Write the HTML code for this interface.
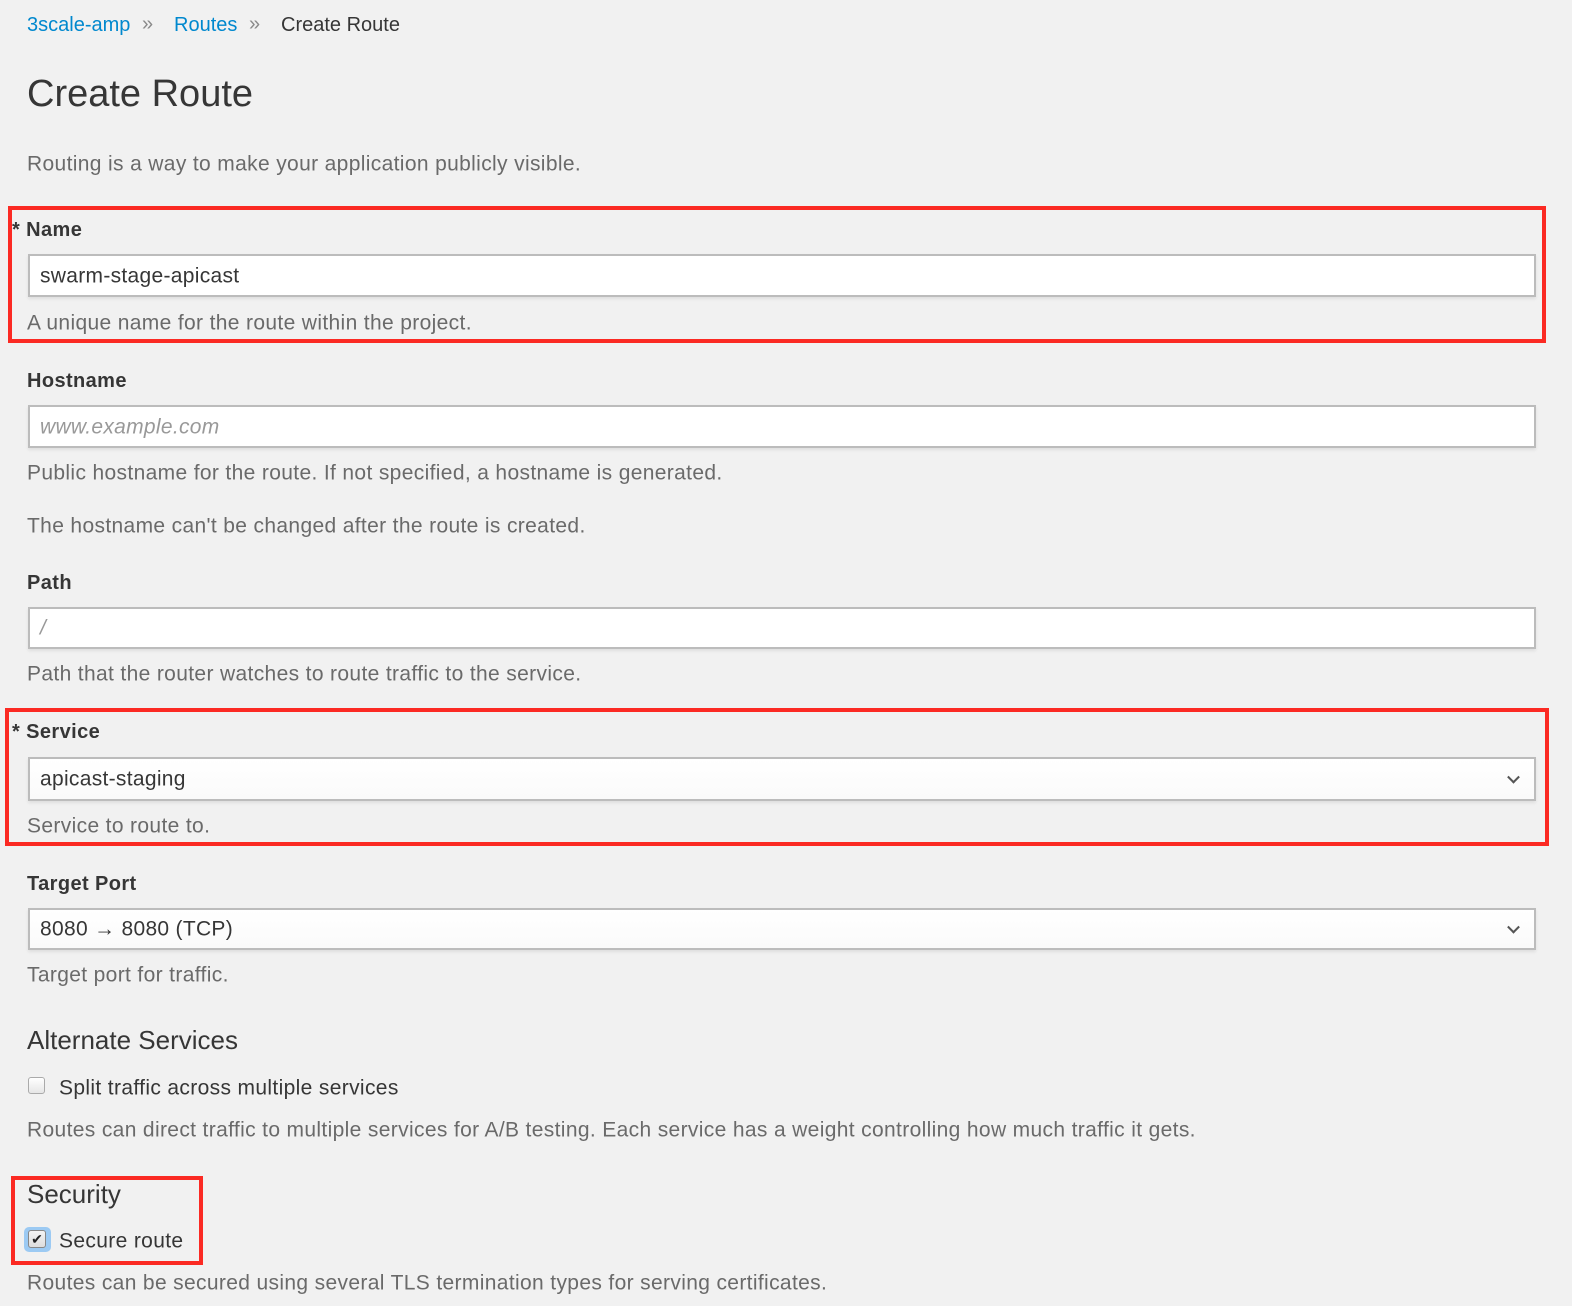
<!DOCTYPE html>
<html><head><meta charset="utf-8"><style>
body{margin:0;width:1572px;height:1306px;background:#f1f1f1;font-family:"Liberation Sans",sans-serif;position:relative;overflow:hidden;color:#363636}
.a{position:absolute;white-space:nowrap;line-height:1}
.t{font-size:21px;letter-spacing:0.35px;transform:translateY(-50%)}
.bc{font-size:20px;transform:translateY(-50%)}
.help{color:#6a6a6a}
.lbl{font-weight:bold;color:#363636;font-size:20px;letter-spacing:0.4px}
.in{position:absolute;left:28px;width:1508px;background:#fff;border:2px solid #bcbcbc;box-sizing:border-box;box-shadow:0 2px 3px rgba(0,0,0,.08)}
.in span{position:absolute;left:10px;top:50%;transform:translateY(-50%);font-size:21px;letter-spacing:0.3px;line-height:1}
.red{position:absolute;border:4px solid #fb2a23;box-sizing:border-box}
.chev{position:absolute;right:16px;top:50%;width:7px;height:7px;border-right:2px solid #555;border-bottom:2px solid #555;transform:translateY(-70%) rotate(45deg)}
</style></head><body>
<div class="a bc" style="left:27px;top:25px;color:#0088ce">3scale-amp</div>
<div class="a bc" style="left:142px;top:24px;color:#8a8a8a">»</div>
<div class="a bc" style="left:174px;top:25px;color:#0088ce">Routes</div>
<div class="a bc" style="left:249px;top:24px;color:#8a8a8a">»</div>
<div class="a bc" style="left:281px;top:25px;color:#363636">Create Route</div>
<div class="a" style="left:27px;top:94px;font-size:38px;transform:translateY(-50%);color:#363636">Create Route</div>
<div class="a t help" style="left:27px;top:164px">Routing is a way to make your application publicly visible.</div>

<div class="red" style="left:8px;top:206px;width:1538px;height:137px"></div>
<div class="a t lbl" style="left:12px;top:230px">* Name</div>
<div class="in" style="top:254px;height:43px"><span>swarm-stage-apicast</span></div>
<div class="a t help" style="left:27px;top:323px">A unique name for the route within the project.</div>

<div class="a t lbl" style="left:27px;top:381px">Hostname</div>
<div class="in" style="top:405px;height:43px"><span style="font-style:italic;color:#999">www.example.com</span></div>
<div class="a t help" style="left:27px;top:473px">Public hostname for the route. If not specified, a hostname is generated.</div>
<div class="a t help" style="left:27px;top:526px">The hostname can't be changed after the route is created.</div>

<div class="a t lbl" style="left:27px;top:583px">Path</div>
<div class="in" style="top:607px;height:42px"><span style="font-style:italic;color:#999">/</span></div>
<div class="a t help" style="left:27px;top:674px">Path that the router watches to route traffic to the service.</div>

<div class="red" style="left:5px;top:708px;width:1544px;height:138px"></div>
<div class="a t lbl" style="left:12px;top:732px">* Service</div>
<div class="in" style="top:757px;height:44px;background:linear-gradient(#fff,#fafafa)"><span>apicast-staging</span><i class="chev"></i></div>
<div class="a t help" style="left:27px;top:826px">Service to route to.</div>

<div class="a t lbl" style="left:27px;top:884px">Target Port</div>
<div class="in" style="top:908px;height:42px;background:linear-gradient(#fff,#fafafa)"><span>8080 → 8080 (TCP)</span><i class="chev"></i></div>
<div class="a t help" style="left:27px;top:975px">Target port for traffic.</div>

<div class="a" style="left:27px;top:1040px;font-size:26px;transform:translateY(-50%)">Alternate Services</div>
<div style="position:absolute;left:28px;top:1077px;width:17px;height:17px;border:1px solid #aaa;border-radius:3px;box-sizing:border-box;background:linear-gradient(#fff,#e6e6e6)"></div>
<div class="a t" style="left:59px;top:1088px">Split traffic across multiple services</div>
<div class="a t help" style="left:27px;top:1130px">Routes can direct traffic to multiple services for A/B testing. Each service has a weight controlling how much traffic it gets.</div>

<div class="red" style="left:11px;top:1176px;width:192px;height:89px"></div>
<div class="a" style="left:27px;top:1194px;font-size:26px;transform:translateY(-50%)">Security</div>
<div style="position:absolute;left:24px;top:1227px;width:27px;height:25px;border-radius:5px;background:#9ccaf3"></div>
<div style="position:absolute;left:28px;top:1230px;width:18px;height:18px;border:1px solid #888;border-radius:3px;box-sizing:border-box;background:linear-gradient(#f4f4f4,#ddd);font-size:14px;line-height:16px;text-align:center;color:#222">✔</div>
<div class="a t" style="left:59px;top:1241px">Secure route</div>
<div class="a t help" style="left:27px;top:1283px">Routes can be secured using several TLS termination types for serving certificates.</div>
</body></html>
